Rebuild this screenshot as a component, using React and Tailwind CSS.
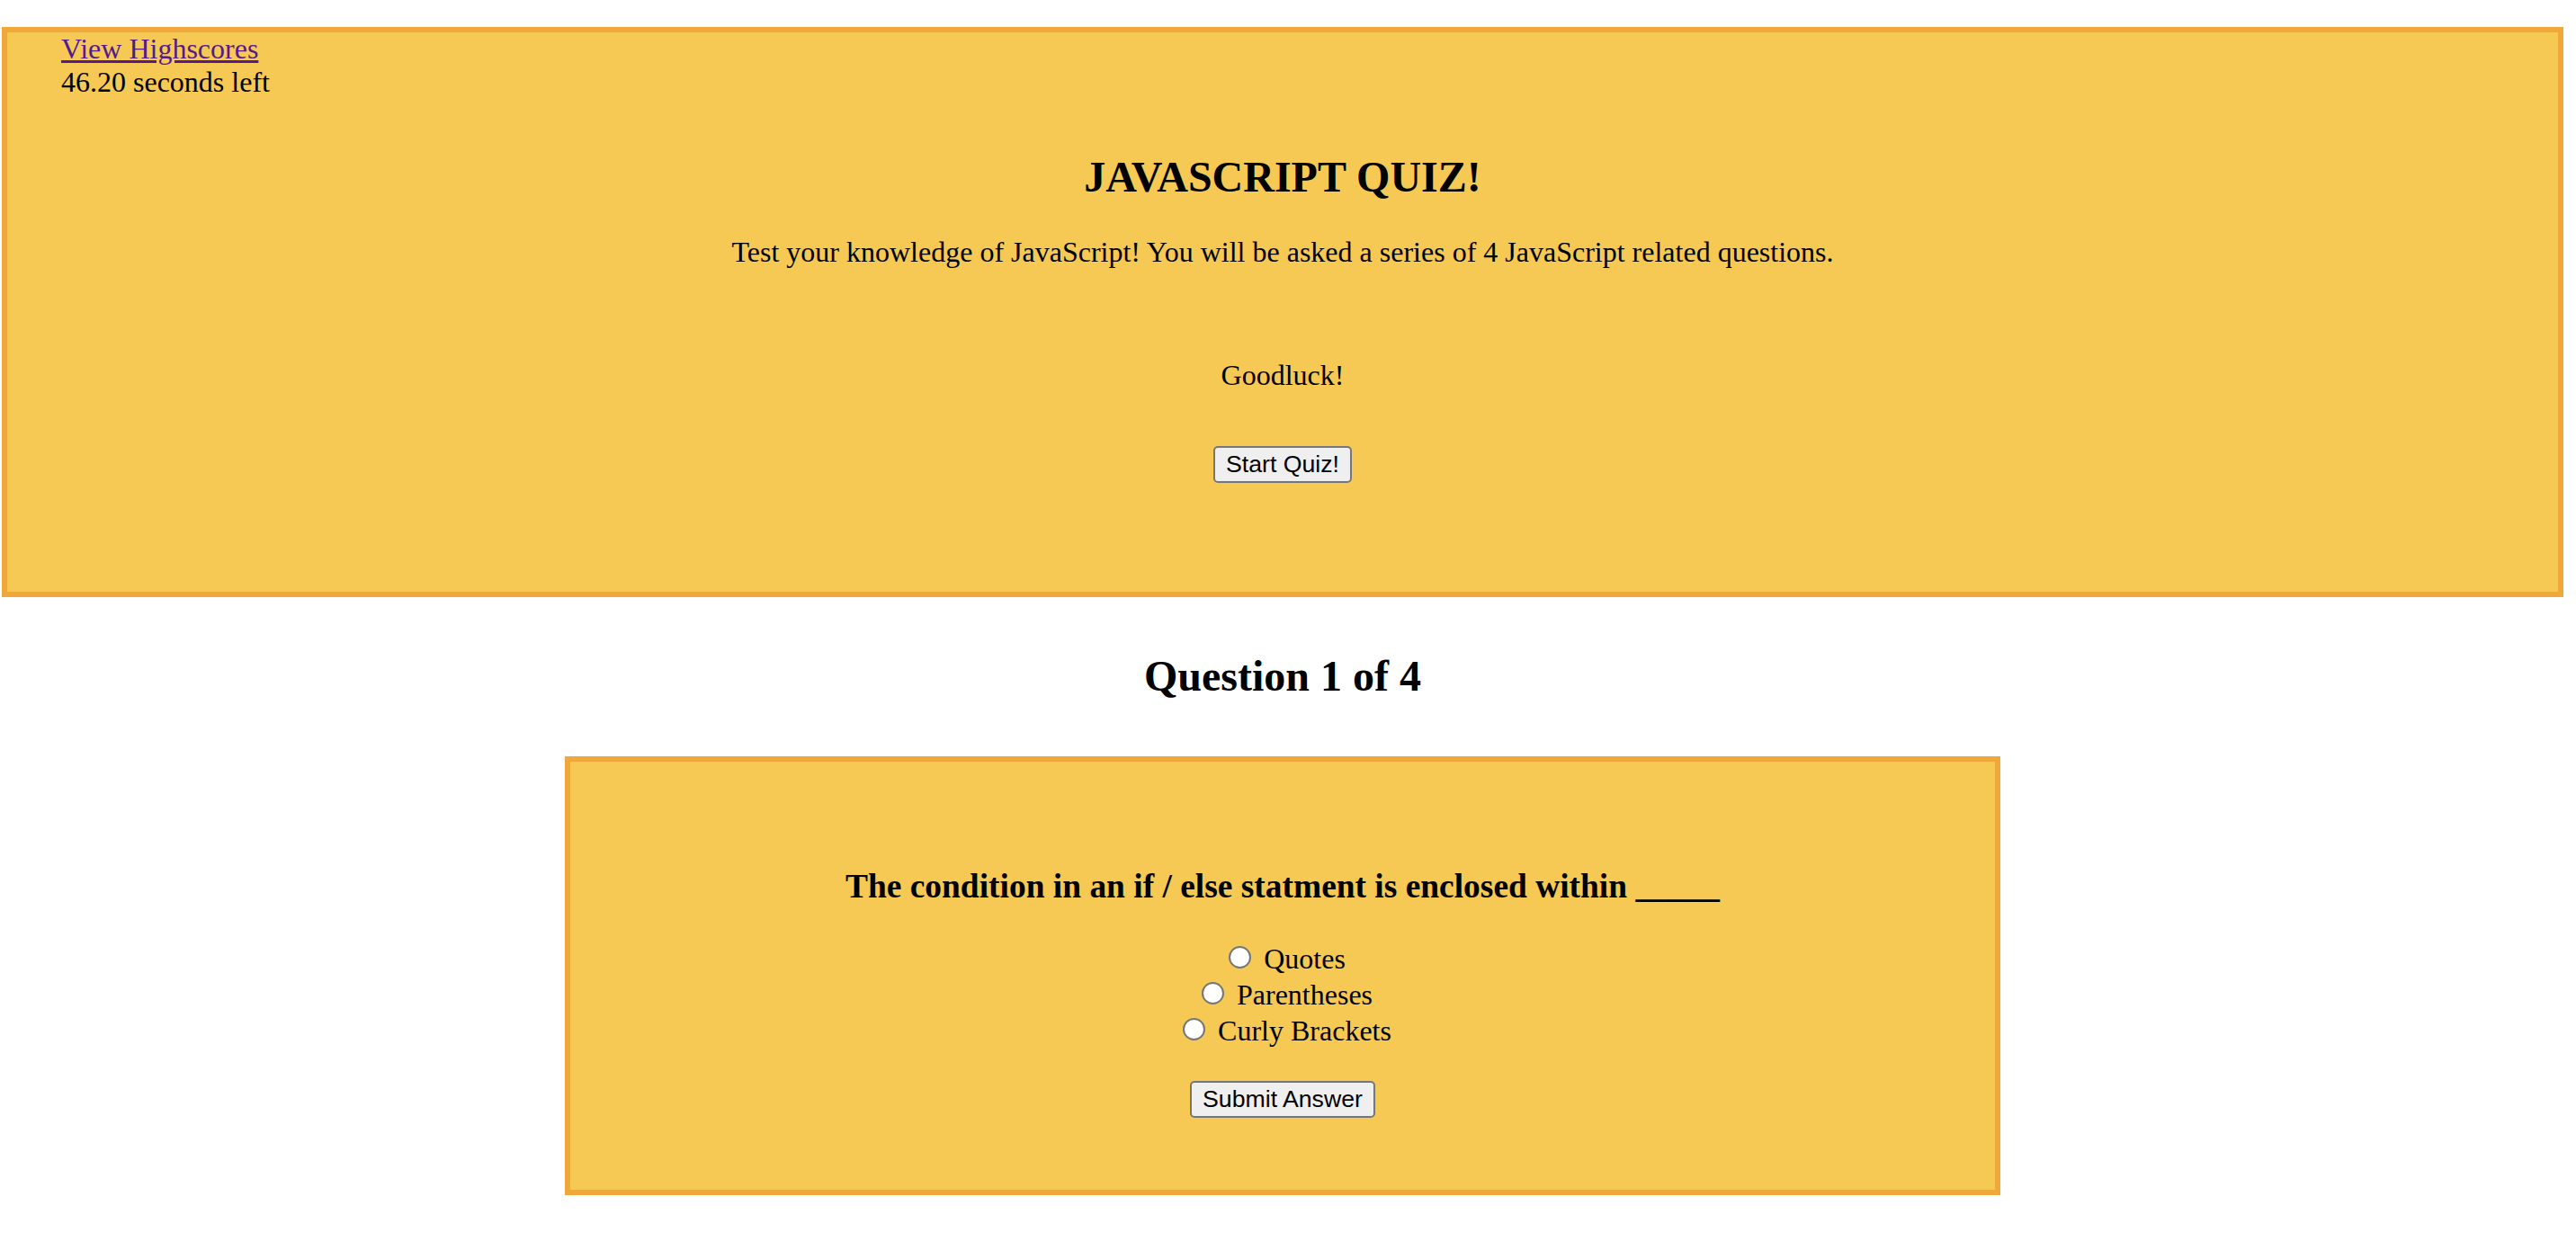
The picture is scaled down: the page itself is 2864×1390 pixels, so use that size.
import { useState } from "react";

const choices = ["Quotes", "Parentheses", "Curly Brackets"];

export default function App() {
  const [picked, setPicked] = useState(null);

  return (
    <div className="min-h-screen bg-white pl-[2px] pr-[14px] pt-[30px] font-['Liberation_Serif',serif] text-black">
      {/* intro card */}
      <div className="border-[6px] border-[#f0a83b] bg-[#f6c955] pb-[121px]">
        <div className="pl-[60px] text-[32px] leading-[36.8px]">
          <a href="#" className="block w-fit text-[#551a8b] underline">
            View Highscores
          </a>
          <div>46.20 seconds left</div>
        </div>

        <h2 className="mt-[59px] text-center text-[48px] font-bold leading-[55.2px]">
          JAVASCRIPT QUIZ!
        </h2>
        <p className="mt-[38px] text-center text-[32px] leading-[36.8px]">
          Test your knowledge of JavaScript! You will be asked a series of 4
          JavaScript related questions.
        </p>
        <p className="mt-[100px] text-center text-[32px] leading-[36.8px]">
          Goodluck!
        </p>
        <div className="mt-[61px] flex justify-center">
          <button className="rounded-[5px] border-2 border-[#767676] bg-[#efefef] px-[12px] py-[3px] font-['Liberation_Sans',sans-serif] text-[26.67px] leading-[31px] text-black">
            Start Quiz!
          </button>
        </div>
      </div>

      <h2 className="mt-[60px] text-center text-[48px] font-bold leading-[55.2px]">
        Question 1 of 4
      </h2>

      {/* question card */}
      <div className="mx-auto mt-[61px] w-[1596px] border-[6px] border-[#f0a83b] bg-[#f6c955] pt-[117px] pb-[80px]">
        <h3 className="text-center text-[37.44px] font-bold leading-[43px]">
          The condition in an if / else statment is enclosed within _____
        </h3>
        <div className="mt-[39px]">
          {choices.map((c) => (
            <div key={c} className="h-[40px] text-center text-[32px] leading-[40px]">
              <label>
                <input
                  type="radio"
                  name="answer"
                  checked={picked === c}
                  onChange={() => setPicked(c)}
                  className="ml-[10px] mr-[14px] mt-[6px] inline-block h-[25px] w-[25px] appearance-none rounded-full border-2 border-[#767676] bg-white align-baseline checked:border-[7px] checked:border-[#0075ff]"
                />
                {c}
              </label>
            </div>
          ))}
        </div>
        <div className="mt-[36px] flex justify-center">
          <button className="rounded-[5px] border-2 border-[#767676] bg-[#efefef] px-[12px] py-[3px] font-['Liberation_Sans',sans-serif] text-[26.67px] leading-[31px] text-black">
            Submit Answer
          </button>
        </div>
      </div>
    </div>
  );
}
